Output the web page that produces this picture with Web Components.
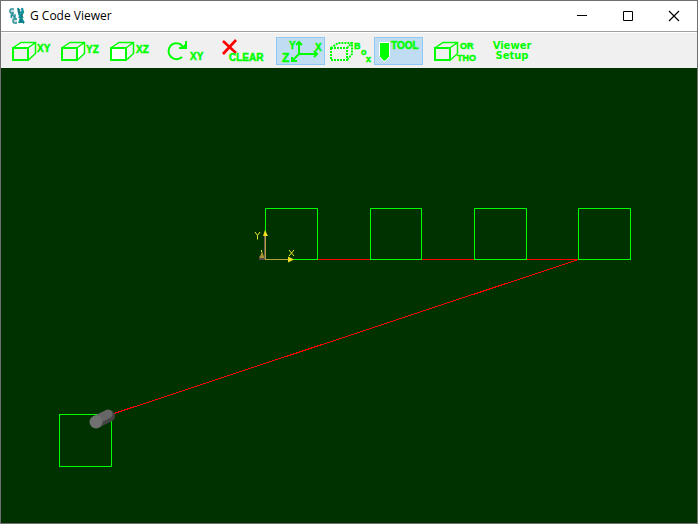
<!DOCTYPE html>
<html lang="en">
<head>
<meta charset="utf-8">
<title>G Code Viewer</title>
<style>
html,body{margin:0;height:100%}
body{font-family:"Open Sans","Noto Sans",sans-serif}
</style>
</head>
<body>
<viewer-window>
  <title-bar slot="title">G Code Viewer</title-bar>
  <tool-bar slot="tools">
    <tool-button label="XY view" icon="xy"></tool-button>
    <tool-button label="YZ view" icon="yz"></tool-button>
    <tool-button label="XZ view" icon="xz"></tool-button>
    <tool-gap></tool-gap>
    <tool-button label="Rotate XY" icon="rotate"></tool-button>
    <tool-gap></tool-gap>
    <tool-button label="Clear" icon="clear"></tool-button>
    <tool-gap></tool-gap>
    <tool-button label="Axes" icon="axes" pressed></tool-button>
    <tool-button label="Box" icon="box"></tool-button>
    <tool-button label="Tool" icon="tool" pressed></tool-button>
    <tool-gap></tool-gap>
    <tool-button label="Ortho" icon="ortho"></tool-button>
    <tool-gap></tool-gap>
    <tool-button label="Viewer Setup" icon="setup"></tool-button>
  </tool-bar>
  <path-view></path-view>
</viewer-window>
<script>
function define(name, html, setup) {
  customElements.define(name, class extends HTMLElement {
    constructor() {
      super();
      this.attachShadow({mode: "open"}).innerHTML = html;
    }
    connectedCallback() { if (setup) setup(this, this.shadowRoot); }
  });
}

define("viewer-window", `<style>
:host{display:flex;flex-direction:column;height:100vh;box-sizing:border-box;border:1px solid #707070;background:#fff}
main{flex:1;min-height:0;display:flex}
</style><slot name="title"></slot><slot name="tools"></slot><main><slot></slot></main>`);

define("title-bar", `<style>
:host{display:flex;align-items:center;height:30px;background:#fff;color:#000;border-bottom:1px solid #a0a0a0}
.logo{width:18px;height:18px;margin-left:7px;flex:none}
h1{flex:1;font-weight:400;font-size:12px;line-height:16px;margin:0 0 0 4px;white-space:nowrap}
button{width:46px;height:30px;border:0;padding:0;background:none;display:flex;align-items:center;justify-content:center}
svg{display:block}
button svg{fill:none;stroke:#000}
</style>
<svg class="logo" viewBox="0 0 18 18" fill="none" aria-hidden="true">
<g stroke="#c3dadd" stroke-width="4"><path d="M4 3v5l3 5v3M12 2v6l2 7"/></g>
<g stroke="#2a9298" stroke-width="1.4"><path d="M6 2H3L2 3v2l1 1h3M3 11l1-4 3 4V7M9 12H6l-1 1v2l1 1h3"/></g>
<g stroke="#078f97" stroke-width="2"><path d="M10 1l1 5 4-1-1-4M11 7l4 4M15 6l-4 5M11 16l2-5 3 5M12 15h4"/></g>
<path stroke="#295d64" d="M11 2v4M14 7v3M13 12v3M15 16h1"/>
</svg>
<h1><slot></slot></h1>
<button aria-label="Minimize"><svg width="12" height="12"><path d="M1 5.5h10"/></svg></button>
<button aria-label="Maximize"><svg width="12" height="12"><path d="M1.5 1.5h9v9h-9z"/></svg></button>
<button aria-label="Close"><svg width="12" height="12"><path d="M1 1l10 10M11 1L1 11" stroke-width="1.2"/></svg></button>`);

define("tool-bar", `<style>
:host{display:flex;align-items:center;height:35px;padding:0 6px;background:#f0f0f0;border-top:1px solid #fff;overflow:hidden}
</style><slot></slot>`);
define("tool-gap", `<style>:host{display:block;width:8px;flex:none}</style>`);

/* A box in oblique projection; one face may be filled white. */
const cube = (face) => `<g class="l">
${face === "top" ? '<path class="face" d="M6 11l8-5h14l-7 5z"/>' : ""}
${face === "side" ? '<path class="face" d="M21 11l7-5v11l-7 6z"/>' : ""}
<path d="M6.5 10.500L14 5.500h14.500v11L22 22.500M21.500 10.500l7-5"/>
<path class="front" ${face === "front" ? 'style="fill:#fff"' : ""} d="M6 11h15v12H6z"/></g>`;
const icons = {
  xy: cube("top") + `<text x="30" y="15">XY</text>`,
  yz: cube("side") + `<text x="30" y="16">YZ</text>`,
  xz: cube("front") + `<text x="31" y="16">XZ</text>`,
  rotate: `<path class="h" d="M19 7.500A8 8 0 1 0 20 20"/><path class="h" d="M18 7l4 4"/><path fill="#0f0" d="M25 4v8h-8v-2h3l3-3V4z"/><text x="28" y="23">XY</text>`,
  clear: `<path d="M4 4l13 12M17 3L4 17" fill="none" stroke="#f00" stroke-width="2.6"/><text x="10" y="24">CLEAR</text>`,
  axes: `<g class="h"><path d="M23 5v12h18M23 17l-7 7M20 8l3-3 3 3M38 14l3 3-3 3M16 20v4h5"/></g><text x="13" y="12">Y</text><text x="39" y="14">X</text><text class="z" x="6" y="25">Z</text>`,
  box: `<g class="l"><path stroke-width="2" stroke-dasharray="2 1" d="M6 11h16v12H6zL13 6h14v11l-5 6M22 11l5-5"/></g><g class="s"><text x="29" y="12">B</text><text x="36" y="18">o</text><text x="41" y="25">x</text></g>`,
  tool: `<path d="M5.500 5.500h10v14l-4 4.500h-2l-4-4.500z" fill="#0f0" stroke="#fff"/><text x="17" y="12">TOOL</text>`,
  ortho: `<g transform="translate(-2 0)">${cube("")}</g><g class="s"><text x="29" y="12">OR</text><text x="26" y="24">THO</text></g>`,
  setup: `<text class="big" x="24" y="12">Viewer</text><text class="big" x="24" y="22">Setup</text>`
};
define("tool-button", `<style>
:host{display:block;flex:none}
button{display:block;width:49px;height:28px;padding:0;border:0;background:none}
button[aria-pressed=true]{background:#c0dcf3;box-shadow:inset 0 0 0 1px #90c8f6}
svg{display:block}
.l,.h{fill:none;stroke:#0f0;stroke-width:1.5}
.l .front{stroke-width:2}
.l .face{fill:#fff;stroke:none}
.h{stroke-width:2}
text{font:700 10px "Liberation Sans",sans-serif;fill:#0f0;stroke:#0f0;stroke-width:.5px}
.s text{font-size:9px}
.z{font-size:12px}
.big{font:700 10px "DejaVu Sans",sans-serif;text-anchor:middle;stroke:none}
</style><button><svg width="49" height="28"></svg></button>`, (el, root) => {
  const b = root.querySelector("button");
  b.setAttribute("aria-label", el.getAttribute("label"));
  if (el.hasAttribute("pressed")) b.setAttribute("aria-pressed", "true");
  root.querySelector("svg").innerHTML = icons[el.getAttribute("icon")];
});

define("path-view", `<style>
:host{display:block;flex:1;min-width:0;background:#003200}
svg{display:block;width:100%;height:100%}
text{font:10px "Liberation Sans",sans-serif;fill:#e8e832}
</style>
<svg viewBox="1 68 696 455" role="img" aria-label="Tool path" fill="none" shape-rendering="crispEdges">
<path stroke="#f00" d="M265 259.500h314M578.500 259.500L111 414.500"/>
<path stroke="#0f0" d="M265.500 208.500h52v51h-52zM370.500 208.500h51v51h-51zM474.500 208.500h52v51h-52zM578.500 208.500h52v51h-52zM59.500 414.500h52v52h-52z"/>
<path stroke="#b4a03c" d="M265 259.500h24"/>
<path stroke="#6b5b50" d="M264.500 236v24"/><path stroke="#b4a03c" d="M265.500 236v23"/>
<g fill="#f0e020" shape-rendering="auto"><path d="M265 230l3 6h-5zM288 256.500l6 3-6 3z"/></g>
<path fill="#554848" d="M259 256h5v4h-5z"/><path fill="#a89430" shape-rendering="auto" d="M262 251l2.500 7h-5z"/>
<path stroke="#e8e832" d="M261.500 250v2"/>
<g shape-rendering="auto" stroke="#e8e832"><path d="M255 232l2.500 3.500V239.500M260 232l-2.500 3.500M289 250l5 6M294 250l-5 6"/></g>
<g shape-rendering="auto" stroke-linecap="round"><path stroke="#444" stroke-width="12" d="M97 422l12-6"/><path stroke="#666" stroke-width="9" d="M96 420l12-6"/><circle cx="96" cy="422" r="6.500" fill="#707070"/></g>
</svg>`);
</script>
</body>
</html>
